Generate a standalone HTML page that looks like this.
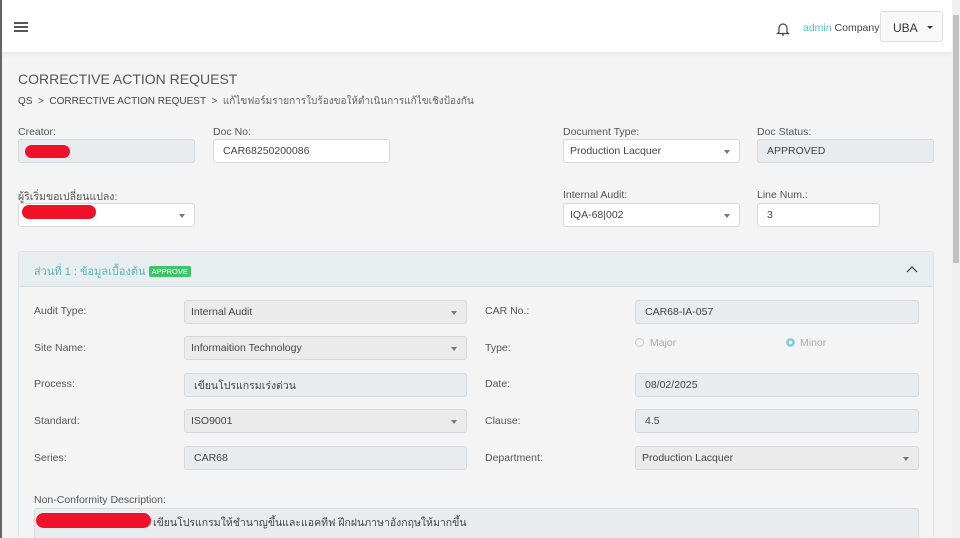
<!DOCTYPE html>
<html><head><meta charset="utf-8"><style>
*{box-sizing:border-box;margin:0;padding:0}
html{overflow:hidden;width:960px;height:538px}
body{width:960px;height:538px;overflow:hidden;background:#f4f4f4;font-family:"Liberation Sans","Noto Sans CJK SC",sans-serif;color:#555;position:relative;font-size:10px}
.a{position:absolute}
.hdr{left:0;top:0;width:952px;height:52px;background:#fff;box-shadow:0 2px 6px rgba(0,0,0,.06)}
.lb{position:absolute;font-size:10.5px;color:#555;white-space:nowrap}
.in{position:absolute;height:24px;border:1px solid #d6d9dc;border-radius:3px;background:#fff;font-size:10.5px;color:#444;padding-left:9px;display:flex;align-items:center;white-space:nowrap}
.ro{background:#e9ecef}
.sel{background:#ebebeb;padding-left:6px}
.caret{position:absolute;right:9px;top:10px;border-left:3px solid transparent;border-right:3px solid transparent;border-top:4px solid #777}
.red{position:absolute;background:#f0102a;border-radius:8px}
</style></head><body>
<div class="a hdr"></div>
<div class="a" style="left:0;top:0;width:2px;height:538px;background:#666"></div>
<div class="a" style="left:14px;top:22px;width:14px;height:2px;background:#555;box-shadow:0 4px 0 #555,0 8px 0 #555"></div>
<svg class="a" style="left:776px;top:21px" width="14" height="16" viewBox="0 0 14 16"><path d="M3 11V7a4 4 0 0 1 8 0v4l1.5 1.5h-11z M6 14h2" fill="none" stroke="#444" stroke-width="1.2"/></svg>
<div class="a" style="left:803px;top:22px;font-size:10.5px;color:#444"><span style="color:#5bbfc4">admin</span> Company</div>
<div class="a" style="left:880px;top:11px;width:63px;height:31px;border:1px solid #ddd;border-radius:3px;background:#f8f8f8;font-size:12px;color:#333;padding:9px 0 0 12px">UBA<span style="position:absolute;left:46px;top:14px;border-left:3px solid transparent;border-right:3px solid transparent;border-top:3px solid #333"></span></div>
<div class="a" style="left:952px;top:0;width:8px;height:538px;background:#f0f0f0"></div>
<div class="a" style="left:953px;top:15px;width:6px;height:248px;background:#c1c1c1"></div>

<div class="a" style="left:18px;top:71px;font-size:14px;color:#555">CORRECTIVE ACTION REQUEST</div>
<div class="a" style="left:18px;top:94px;font-size:10px;color:#444">QS &nbsp;&gt;&nbsp; CORRECTIVE ACTION REQUEST &nbsp;&gt;&nbsp; <span style="color:#666">แก้ไขฟอร์มรายการใบร้องขอให้ดำเนินการแก้ไขเชิงป้องกัน</span></div>

<div class="lb" style="left:18px;top:126px">Creator:</div>
<div class="in ro" style="left:18px;top:139px;width:177px"></div>
<div class="red" style="left:25px;top:145px;width:45px;height:13px"></div>
<div class="lb" style="left:213px;top:126px">Doc No:</div>
<div class="in" style="left:213px;top:139px;width:177px">CAR68250200086</div>
<div class="lb" style="left:563px;top:126px">Document Type:</div>
<div class="in" style="left:563px;top:139px;width:177px;padding-left:6px">Production Lacquer<span class="caret"></span></div>
<div class="lb" style="left:757px;top:126px">Doc Status:</div>
<div class="in ro" style="left:757px;top:139px;width:177px">APPROVED</div>

<div class="lb" style="left:18px;top:188px">ผู้ริเริ่มขอเปลี่ยนแปลง:</div>
<div class="in" style="left:18px;top:203px;width:177px"><span class="caret"></span></div>
<div class="red" style="left:22px;top:205px;width:74px;height:14px"></div>
<div class="lb" style="left:563px;top:189px">Internal Audit:</div>
<div class="in" style="left:563px;top:203px;width:177px;padding-left:6px">IQA-68|002<span class="caret"></span></div>
<div class="lb" style="left:757px;top:189px">Line Num.:</div>
<div class="in" style="left:757px;top:203px;width:123px">3</div>

<div class="a" style="left:18px;top:251px;width:916px;height:300px;border:1px solid #dde3e6;border-radius:3px;background:#f4f4f4"></div>
<div class="a" style="left:19px;top:252px;width:914px;height:35px;background:#e8eef0;border-bottom:1px solid #d8e0e3"></div>
<div class="a" style="left:34px;top:262px;font-size:11px;color:#5bb3b5">ส่วนที่ 1 : ข้อมูลเบื้องต้น <span style="display:inline-block;background:#3fc46a;color:#fff;font-size:7.5px;padding:1px 3px;border-radius:2px;vertical-align:1px">APPROVE</span></div>
<svg class="a" style="left:906px;top:265px" width="12" height="8"><path d="M1 7l5-5 5 5" fill="none" stroke="#333" stroke-width="1.2"/></svg>

<div class="lb" style="left:34px;top:305px">Audit Type:</div>
<div class="in sel" style="left:184px;top:300px;width:283px">Internal Audit<span class="caret"></span></div>
<div class="lb" style="left:34px;top:342px">Site Name:</div>
<div class="in sel" style="left:184px;top:336px;width:283px">Informaition Technology<span class="caret"></span></div>
<div class="lb" style="left:34px;top:378px">Process:</div>
<div class="in ro" style="left:184px;top:373px;width:283px">เขียนโปรแกรมเร่งด่วน</div>
<div class="lb" style="left:34px;top:415px">Standard:</div>
<div class="in sel" style="left:184px;top:409px;width:283px">ISO9001<span class="caret"></span></div>
<div class="lb" style="left:34px;top:452px">Series:</div>
<div class="in ro" style="left:184px;top:446px;width:283px">CAR68</div>

<div class="lb" style="left:485px;top:305px">CAR No.:</div>
<div class="in ro" style="left:635px;top:300px;width:284px">CAR68-IA-057</div>
<div class="lb" style="left:485px;top:342px">Type:</div>
<div class="a" style="left:635px;top:338px;width:9px;height:9px;border:1px solid #ccc;border-radius:50%"></div>
<div class="a" style="left:650px;top:337px;color:#aaa;font-size:10.5px">Major</div>
<div class="a" style="left:786px;top:338px;width:9px;height:9px;border:3px solid #8fcfd2;border-radius:50%;background:#fff"></div>
<div class="a" style="left:800px;top:337px;color:#aaa;font-size:10.5px">Minor</div>
<div class="lb" style="left:485px;top:378px">Date:</div>
<div class="in ro" style="left:635px;top:373px;width:284px">08/02/2025</div>
<div class="lb" style="left:485px;top:415px">Clause:</div>
<div class="in ro" style="left:635px;top:409px;width:284px">4.5</div>
<div class="lb" style="left:485px;top:452px">Department:</div>
<div class="in sel" style="left:635px;top:446px;width:284px">Production Lacquer<span class="caret"></span></div>

<div class="lb" style="left:34px;top:494px">Non-Conformity Description:</div>
<div class="in ro" style="left:34px;top:508px;width:885px;height:40px;padding-left:118px;align-items:flex-start;padding-top:5px">เขียนโปรแกรมให้ชำนาญขึ้นและแอคทีฟ ฝึกฝนภาษาอังกฤษให้มากขึ้น</div>
<div class="red" style="left:36px;top:513px;width:115px;height:15px"></div>
</body></html>
